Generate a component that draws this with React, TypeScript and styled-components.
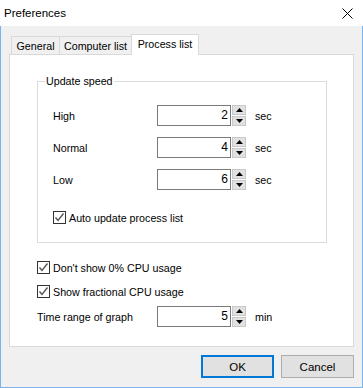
import React from 'react';
import styled, { createGlobalStyle } from 'styled-components';

const Global = createGlobalStyle`
  html, body { margin: 0; padding: 0; background: #fff; }
  body { font-family: "Liberation Sans", Arial, sans-serif; font-size: 10.7px; color: #000; }
  * { box-sizing: border-box; }
`;

const Window = styled.div`
  width: 363px;
  height: 388px;
  display: flex;
  flex-direction: column;
`;

const TitleBar = styled.div`
  height: 26px;
  flex: none;
  background: #fff;
  display: flex;
  align-items: center;
  justify-content: space-between;
  padding: 0 10px 0 4px;
  font-size: 11.5px;
`;

const Body = styled.div`
  flex: 1;
  background: #f0f0f0;
  border: 1px solid #7ab4ec;
  border-top: none;
  padding: 8px 8px 9px 8px;
  display: flex;
  flex-direction: column;
`;

const TabRow = styled.div`
  display: flex;
  height: 20px;
  margin-left: 2px;
  align-items: flex-start;
`;

const Tab = styled.div<{ $active?: boolean; $w: number }>`
  width: ${p => p.$w}px;
  margin-left: -1px;
  &:first-child { margin-left: 0; }
  height: ${p => (p.$active ? 21 : 18)}px;
  margin-top: ${p => (p.$active ? 0 : 2)}px;
  background: ${p => (p.$active ? '#fff' : '#f0f0f0')};
  border: 1px solid #d9d9d9;
  border-bottom: none;
  display: flex;
  align-items: center;
  justify-content: center;
  padding-bottom: ${p => (p.$active ? 2 : 0)}px;
  position: relative;
  z-index: ${p => (p.$active ? 2 : 1)};
`;

const Panel = styled.div`
  height: 293px;
  flex: none;
  background: #fff;
  border: 1px solid #d9d9d9;
  padding: 26px 25px 0 27px;
  display: flex;
  flex-direction: column;
`;

const GroupBox = styled.div`
  position: relative;
  width: 290px;
  height: 162px;
  border: 1px solid #dcdcdc;
  padding: 23px 0 0 15px;
  display: flex;
  flex-direction: column;
  gap: 11px;
`;

const Legend = styled.span`
  position: absolute;
  top: -8px;
  left: 7px;
  padding: 0 1px;
  line-height: 14px;
  background: #fff;
`;

const SpinRow = styled.div<{ $mt?: number }>`
  display: flex;
  align-items: center;
  height: 21px;
  flex: none;
  margin-top: ${p => p.$mt ?? 0}px;
`;

const Label = styled.span<{ $w: number }>`
  width: ${p => p.$w}px;
  flex: none;
`;

const NumberBox = styled.div`
  width: 74px;
  height: 21px;
  border: 1px solid #7a7a7a;
  background: #fff;
  text-align: right;
  padding-right: 2px;
  line-height: 19px;
  font-size: 12px;
`;

const Spinner = styled.div`
  width: 15px;
  height: 21px;
  display: flex;
  flex-direction: column;
  justify-content: space-between;
  padding-left: 1px;
`;

const SpinButton = styled.div`
  height: 10px;
  background: #e1e1e1;
  border: 1px solid #c8c8c8;
  display: flex;
  align-items: center;
  justify-content: center;
`;

const Unit = styled.span`
  margin-left: 9px;
`;

const CheckRow = styled.div<{ $mt: number }>`
  display: flex;
  align-items: center;
  gap: 3px;
  height: 13px;
  flex: none;
  margin-top: ${p => p.$mt}px;
`;

const Box = styled.div`
  width: 13px;
  height: 13px;
  border: 1px solid #333;
  background: #fff;
  display: flex;
  align-items: center;
  justify-content: center;
`;

const ButtonRow = styled.div`
  display: flex;
  justify-content: flex-end;
  gap: 7px;
  margin-top: 8px;
`;

const Button = styled.div<{ $default?: boolean }>`
  width: 73px;
  height: 23px;
  background: #e1e1e1;
  border: ${p => (p.$default ? '2px solid #0078d7' : '1px solid #adadad')};
  display: flex;
  align-items: center;
  justify-content: center;
  font-size: 11.5px;
`;

const Up = () => (
  <svg width="7" height="4" viewBox="0 0 7 4"><path d="M0 4 L3.5 0 L7 4 Z" fill="#000" /></svg>
);
const Down = () => (
  <svg width="7" height="4" viewBox="0 0 7 4"><path d="M0 0 L3.5 4 L7 0 Z" fill="#000" /></svg>
);

const Spin: React.FC<{ label: string; value: number; unit: string; labelWidth: number; mt?: number }> = ({
  label,
  value,
  unit,
  labelWidth,
  mt,
}) => (
  <SpinRow $mt={mt}>
    <Label $w={labelWidth}>{label}</Label>
    <NumberBox>{value}</NumberBox>
    <Spinner>
      <SpinButton><Up /></SpinButton>
      <SpinButton><Down /></SpinButton>
    </Spinner>
    <Unit>{unit}</Unit>
  </SpinRow>
);

const Check: React.FC<{ text: string; mt: number }> = ({ text, mt }) => (
  <CheckRow $mt={mt}>
    <Box>
      <svg width="11" height="11" viewBox="0 0 11 11">
        <path d="M1.5 5.5 L4 8.5 L9.5 1.5" fill="none" stroke="#555" strokeWidth="1.4" />
      </svg>
    </Box>
    <span>{text}</span>
  </CheckRow>
);

export default function App() {
  return (
    <Window>
      <Global />
      <TitleBar>
        <span>Preferences</span>
        <svg width="11" height="11" viewBox="0 0 11 11">
          <path d="M0.5 0.5 L10.5 10.5 M10.5 0.5 L0.5 10.5" stroke="#000" strokeWidth="1" />
        </svg>
      </TitleBar>
      <Body>
        <TabRow>
          <Tab $w={49}>General</Tab>
          <Tab $w={73}>Computer list</Tab>
          <Tab $w={68} $active>Process list</Tab>
        </TabRow>
        <Panel>
          <GroupBox>
            <Legend>Update speed</Legend>
            <Spin label="High" value={2} unit="sec" labelWidth={104} />
            <Spin label="Normal" value={4} unit="sec" labelWidth={104} />
            <Spin label="Low" value={6} unit="sec" labelWidth={104} />
            <Check text="Auto update process list" mt={10} />
          </GroupBox>
          <Check text="Don't show 0% CPU usage" mt={18} />
          <Check text="Show fractional CPU usage" mt={11} />
          <Spin label="Time range of graph" value={5} unit="min" labelWidth={120} mt={8} />
        </Panel>
        <ButtonRow>
          <Button $default>OK</Button>
          <Button>Cancel</Button>
        </ButtonRow>
      </Body>
    </Window>
  );
}
